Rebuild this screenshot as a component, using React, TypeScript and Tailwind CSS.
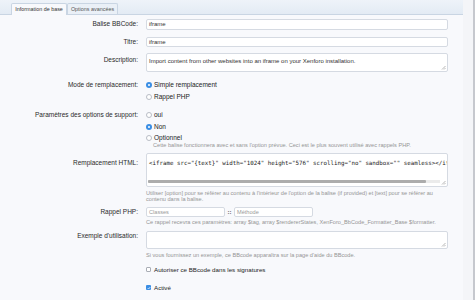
import React from "react";

const font = { fontFamily: '"Liberation Sans", Arial, sans-serif' };

function Grip() {
  return (
    <svg width="5" height="5" viewBox="0 0 5 5" className="absolute right-[1px] bottom-[1px]">
      <path d="M1 4.5L4.5 1M3 4.5L4.5 3" stroke="#9a9a9a" strokeWidth="0.7" />
    </svg>
  );
}

function Radio({ checked, label }: { checked?: boolean; label: string }) {
  return (
    <div className="flex items-center gap-[1px] h-full">
      {checked ? (
        <span className="w-[6px] h-[6px] rounded-full bg-[#3b8ee4] flex items-center justify-center">
          <span className="w-[2px] h-[2px] rounded-full bg-white" />
        </span>
      ) : (
        <span className="w-[6px] h-[6px] rounded-full border-[0.5px] border-[#b9bdc5] bg-white" />
      )}
      <span className="text-[6.5px] text-[#222] ml-[1px]">{label}</span>
    </div>
  );
}

function Label({ children }: { children: React.ReactNode }) {
  return <div className="text-right pr-[8px] text-[6.5px] text-[#2a2a2a] leading-none">{children}</div>;
}

function Hint({ children }: { children: React.ReactNode }) {
  return <div className="text-[5.6px] leading-[5.8px] text-[#959595]">{children}</div>;
}

export default function App() {
  return (
    <div className="w-[476px] h-[300px] bg-[#f8f9fc] flex overflow-hidden" style={font}>
      <div className="w-[463px] flex flex-col">
        {/* tabs */}
        <div className="h-[15px] shrink-0 bg-gradient-to-b from-[#eef3f9] to-[#e3ebf4] border-b border-[#c9d5e3] flex items-end pl-[11px]">
          <div className="h-[12px] w-[56px] -mb-[1px] bg-[#f8f9fc] border border-b-0 border-[#c9d5e3] rounded-t-[2px] flex items-center justify-center text-[5.4px] text-[#333]">
            Information de base
          </div>
          <div className="h-[11px] w-[51px] bg-[#eaf0f7] border border-b-0 border-[#c9d5e3] rounded-t-[2px] flex items-center justify-center text-[5.4px] text-[#555]">
            Options avancées
          </div>
        </div>

        <div className="grid grid-cols-[146px_302px] items-start">
          {/* Balise */}
          <div className="col-span-2 grid grid-cols-subgrid items-center mt-[4px] h-[11px]">
            <Label>Balise BBCode:</Label>
            <div className="h-[11px] bg-white border-[0.5px] border-[#d5dae2] rounded-[2px] px-[2px] flex items-center text-[6px] text-[#333]">iframe</div>
          </div>
          {/* Titre */}
          <div className="col-span-2 grid grid-cols-subgrid items-center mt-[7px] h-[10px]">
            <Label>Titre:</Label>
            <div className="h-[10px] bg-white border-[0.5px] border-[#d5dae2] rounded-[2px] px-[2px] flex items-center text-[6px] text-[#333]">iframe</div>
          </div>
          {/* Description */}
          <div className="col-span-2 grid grid-cols-subgrid mt-[6px]">
            <div className="pt-[4px]"><Label>Description:</Label></div>
            <div className="relative h-[19px] bg-white border-[0.5px] border-[#d5dae2] rounded-[2px] px-[2px] pt-[4px] text-[6px] text-[#333] leading-none">
              Import content from other websites into an iframe on your Xenforo installation.
              <Grip />
            </div>
          </div>
          {/* Mode */}
          <div className="col-span-2 grid grid-cols-subgrid mt-[7px]">
            <div className="h-[12px] flex items-center justify-end"><Label>Mode de remplacement:</Label></div>
            <div className="flex flex-col">
              <div className="h-[12px]"><Radio checked label="Simple remplacement" /></div>
              <div className="h-[12px]"><Radio label="Rappel PHP" /></div>
            </div>
          </div>
          {/* Parametres */}
          <div className="col-span-2 grid grid-cols-subgrid mt-[6px]">
            <div className="h-[12px] flex items-center justify-end"><Label>Paramètres des options de support:</Label></div>
            <div className="flex flex-col">
              <div className="h-[12px]"><Radio label="oui" /></div>
              <div className="h-[12px]"><Radio checked label="Non" /></div>
              <div className="h-[10px]"><Radio label="Optionnel" /></div>
              <div className="pl-[7px]">
                <Hint>Cette balise fonctionnera avec et sans l'option prévue. Ceci est le plus souvent utilisé avec rappels PHP.</Hint>
              </div>
            </div>
          </div>
          {/* Remplacement HTML */}
          <div className="col-span-2 grid grid-cols-subgrid mt-[4px]">
            <div className="pt-[7px]"><Label>Remplacement HTML:</Label></div>
            <div>
              <div className="relative h-[34px] bg-white border-[0.5px] border-[#d5dae2] rounded-[2px] overflow-hidden">
                <div className="pt-[7px] pl-[2px] whitespace-nowrap text-[5.8px] leading-none text-[#222]" style={{ fontFamily: '"DejaVu Sans Mono", "Liberation Mono", monospace' }}>
                  {'<iframe src="{text}" width="1024" height="576" scrolling="no" sandbox="" seamless></iframe>'}
                </div>
                <div className="absolute left-[1px] right-[7px] bottom-[3px] h-[3px] bg-[#ebebeb]">
                  <div className="w-[278px] h-full bg-[#acacac] rounded-[1px]" />
                </div>
                <Grip />
              </div>
              <div className="mt-[4px] w-[292px]">
                <Hint>
                  Utiliser [option] pour se référer au contenu à l'intérieur de l'option de la balise (if provided) et [text] pour se référer au contenu dans la balise.
                </Hint>
              </div>
            </div>
          </div>
          {/* Rappel PHP */}
          <div className="col-span-2 grid grid-cols-subgrid mt-[5px]">
            <div className="h-[10px] flex items-center justify-end"><Label>Rappel PHP:</Label></div>
            <div>
              <div className="flex items-center h-[10px]">
                <div className="w-[79px] h-[10px] bg-white border-[0.5px] border-[#d5dae2] rounded-[2px] px-[2px] flex items-center text-[5.6px] text-[#9a9a9a]">Classes</div>
                <span className="w-[9px] text-center text-[6px] font-bold text-[#444]">::</span>
                <div className="w-[79px] h-[10px] bg-white border-[0.5px] border-[#d5dae2] rounded-[2px] px-[2px] flex items-center text-[5.6px] text-[#9a9a9a]">Méthode</div>
              </div>
              <div className="mt-[3px]">
                <Hint>Ce rappel recevra ces paramètres: array $tag, array $rendererStates, XenForo_BbCode_Formatter_Base $formatter.</Hint>
              </div>
            </div>
          </div>
          {/* Exemple */}
          <div className="col-span-2 grid grid-cols-subgrid mt-[5px]">
            <div className="pt-[2px]"><Label>Exemple d'utilisation:</Label></div>
            <div>
              <div className="relative h-[18px] bg-white border-[0.5px] border-[#d5dae2] rounded-[2px]">
                <Grip />
              </div>
              <div className="mt-[4px]">
                <Hint>Si vous fournissez un exemple, ce BBcode apparaîtra sur la page d'aide du BBcode.</Hint>
              </div>
            </div>
          </div>
          {/* Autoriser */}
          <div className="col-span-2 grid grid-cols-subgrid mt-[6px]">
            <div />
            <div className="flex items-center h-[10px] gap-[2px]">
              <span className="w-[5px] h-[5px] border-[0.5px] border-[#a9adb5] bg-white rounded-[1px]" />
              <span className="text-[6.2px] text-[#222] ml-[1px]">Autoriser ce BBcode dans les signatures</span>
            </div>
          </div>
          {/* Active */}
          <div className="col-span-2 grid grid-cols-subgrid mt-[8px]">
            <div />
            <div className="flex items-center h-[10px] gap-[2px]">
              <span className="w-[5px] h-[5px] bg-[#3b8ee4] rounded-[1px] flex items-center justify-center">
                <svg width="4" height="4" viewBox="0 0 4 4">
                  <path d="M0.7 2.1L1.6 3L3.3 1" stroke="white" strokeWidth="0.7" fill="none" />
                </svg>
              </span>
              <span className="text-[6.2px] text-[#222] ml-[1px]">Activé</span>
            </div>
          </div>
        </div>
      </div>
      <div className="w-[10px] bg-[#f4f5f8]" />
      <div className="w-[2px] bg-[#c6c8ce]" />
      <div className="flex-1 bg-white" />
    </div>
  );
}
